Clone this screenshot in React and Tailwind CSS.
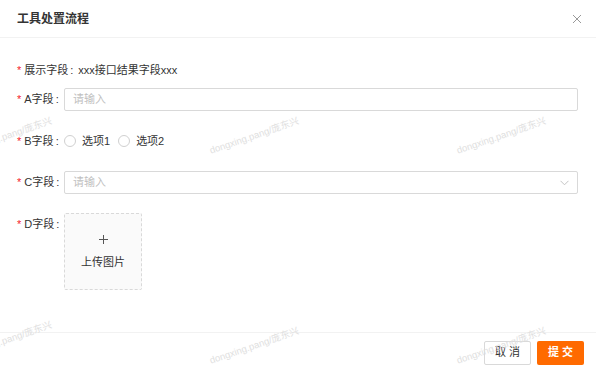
import React from 'react';

const marks = [
  'left-[-37px] top-[146px]',
  'left-[210px] top-[146px]',
  'left-[457px] top-[146px]',
  'left-[-37px] top-[350px]',
  'left-[210px] top-[356px]',
  'left-[457px] top-[356px]',
];

function Watermark() {
  return (
    <div className="pointer-events-none absolute inset-0 overflow-hidden z-10">
      {marks.map((pos, i) => (
        <span
          key={i}
          className={`absolute ${pos} origin-left -rotate-[19deg] whitespace-nowrap text-[9.5px] leading-[10px] text-[#e0e0e0]`}
        >
          dongxing.pang/庞东兴
        </span>
      ))}
    </div>
  );
}

function Label({ text }) {
  return (
    <div className="flex items-center h-[23px] w-[47px] shrink-0 whitespace-nowrap">
      <span className="text-[#f5222d] text-[11px] mr-[3px] leading-none">*</span>
      <span>{text}</span>
      <span className="ml-[2px]">:</span>
    </div>
  );
}

function Radio({ label }) {
  return (
    <div className="flex items-center mr-[8px]">
      <span className="w-[12px] h-[12px] rounded-full border border-[#d0d0d0] bg-white" />
      <span className="ml-[6px]">{label}</span>
    </div>
  );
}

export default function App() {
  return (
    <div
      className="relative w-[596px] h-[371px] bg-white flex flex-col overflow-hidden text-[11px] text-[#333]"
      style={{ fontFamily: '"Liberation Sans", "Noto Sans CJK SC", sans-serif' }}
    >
      {/* 头部 */}
      <div className="h-[38px] shrink-0 flex items-center justify-between pl-[17px] pr-[14px] border-b border-[#f2f2f2]">
        <span className="text-[12px] font-bold text-[#333]">工具处置流程</span>
        <svg width="10" height="10" viewBox="0 0 10 10" className="text-[#999]">
          <path d="M1 1L9 9M9 1L1 9" stroke="currentColor" strokeWidth="1" fill="none" />
        </svg>
      </div>

      {/* 表单 */}
      <div className="flex-1 pl-[17px] pr-[18px] pt-[20px]">
        <div className="flex items-center h-6 whitespace-nowrap">
          <span className="text-[#f5222d] text-[11px] mr-[3px] leading-none">*</span>
          <span>展示字段</span>
          <span className="ml-[2px] mr-[5px]">:</span>
          <span>xxx接口结果字段xxx</span>
        </div>

        <div className="flex mt-[6px]">
          <Label text="A字段" />
          <div className="flex-1 h-[23px] border border-[#d9d9d9] rounded-[2px] flex items-center px-[8px] text-[#bfbfbf]">
            请输入
          </div>
        </div>

        <div className="flex items-center h-6 mt-[18px]">
          <Label text="B字段" />
          <div className="flex items-center">
            <Radio label="选项1" />
            <Radio label="选项2" />
          </div>
        </div>

        <div className="flex mt-[18px]">
          <Label text="C字段" />
          <div className="flex-1 h-[23px] border border-[#d9d9d9] rounded-[2px] flex items-center justify-between pl-[8px] pr-[8px] text-[#bfbfbf]">
            <span>请输入</span>
            <svg width="9" height="6" viewBox="0 0 9 6" className="text-[#c4c4c4]">
              <path d="M0.5 0.8L4.5 4.8L8.5 0.8" stroke="currentColor" strokeWidth="1" fill="none" />
            </svg>
          </div>
        </div>

        <div className="flex mt-[19px]">
          <Label text="D字段" />
          <div className="w-[78px] h-[77px] border border-dashed border-[#d9d9d9] bg-[#fafafa] rounded-[2px] flex flex-col items-center justify-center">
            <svg width="9" height="9" viewBox="0 0 9 9" className="text-[#555] mt-[2px]">
              <path d="M4.5 0V9M0 4.5H9" stroke="currentColor" strokeWidth="1" fill="none" />
            </svg>
            <span className="mt-[10px] text-[11px]">上传图片</span>
          </div>
        </div>
      </div>

      {/* 底部 */}
      <div className="h-[39px] shrink-0 border-t border-[#f2f2f2] flex items-center justify-end gap-[6px] pr-[12px] pt-px">
        <button className="w-[47px] h-[24px] border border-[#d9d9d9] rounded-[2px] bg-white text-[11px] text-[#333] tracking-[3px] pl-[3px]">
          取消
        </button>
        <button className="w-[47px] h-[24px] rounded-[2px] bg-[#ff6a00] text-[11px] text-white font-bold tracking-[3px] pl-[3px]">
          提交
        </button>
      </div>

      <Watermark />
    </div>
  );
}
